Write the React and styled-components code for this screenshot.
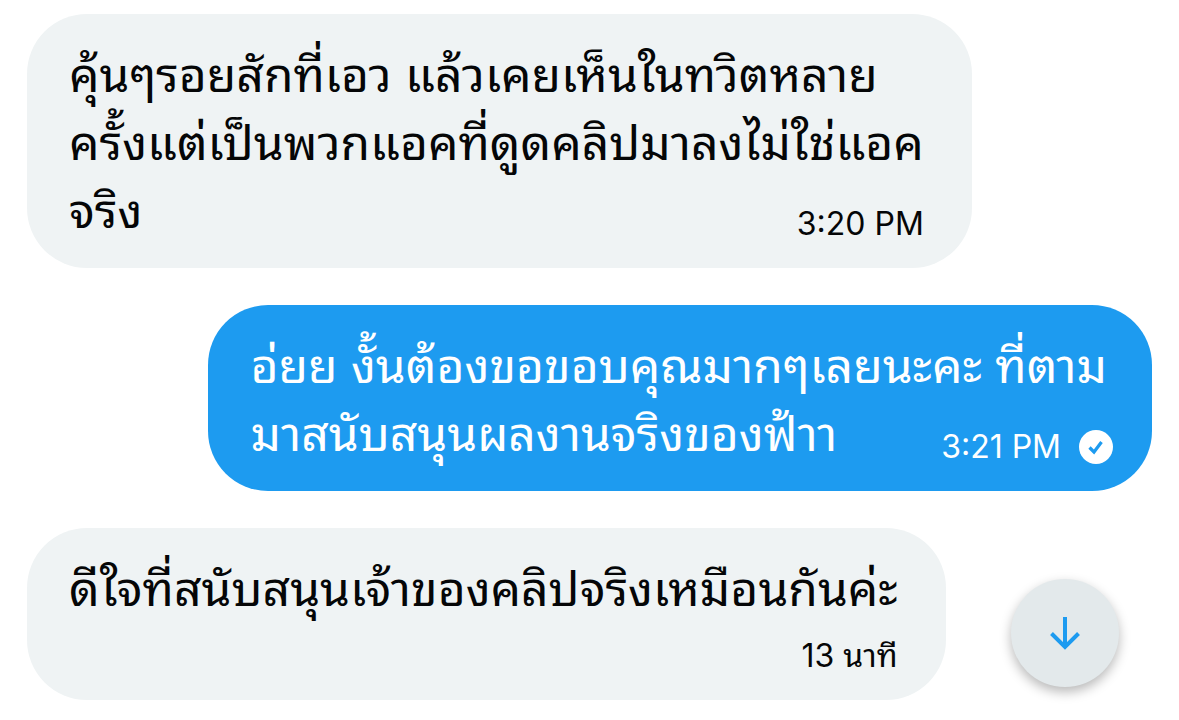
import styled, { createGlobalStyle } from 'styled-components'

const GlobalStyle = createGlobalStyle`
  * {
    box-sizing: border-box;
  }

  body {
    margin: 0;
    background: #ffffff;
    font-family: Inter, 'Noto Sans Thai Looped', Loma, Waree, Garuda, Umpush, 'Noto Sans Thai', sans-serif;
  }
`

const Conversation = styled.main`
  display: flex;
  flex-direction: column;
  gap: 37px;
  padding: 14px 27px 20px;
`

const Bubble = styled.article`
  display: grid;
  align-self: ${({ $sent }) => ($sent ? 'flex-end' : 'flex-start')};
  padding: 27px ${({ $sent }) => ($sent ? '39px' : '48px')} 23px 42px;
  border-radius: 60px;
  color: ${({ $sent }) => ($sent ? '#ffffff' : '#050607')};
  background: ${({ $sent }) => ($sent ? '#1d9bf0' : '#eff3f4')};
`

const Message = styled.p`
  grid-area: 1 / 1;
  margin: 0;
  padding-right: ${({ $sent }) => ($sent ? '6px' : '0')};
  font-size: 48px;
  line-height: 68px;
  white-space: nowrap;
`

const Meta = styled.div`
  grid-area: ${({ $below }) => ($below ? '2 / 1' : '1 / 1')};
  align-self: end;
  justify-self: end;
  display: flex;
  align-items: center;
  gap: 18px;
  padding-top: ${({ $below }) => ($below ? '12px' : '0')};
  font-size: 32px;
  line-height: 42px;
`

const Row = styled.div`
  display: flex;
  align-items: flex-end;
  justify-content: space-between;
`

const ScrollButton = styled.button`
  display: grid;
  place-items: center;
  width: 108px;
  height: 108px;
  margin: 0 33px 13px 0;
  padding: 0;
  border: 0;
  border-radius: 50%;
  color: #1d9bf0;
  background: #e3e9eb;
  box-shadow: 0 5px 12px rgba(0, 0, 0, 0.28);
`

export default function App() {
  return (
    <>
      <GlobalStyle />
      <Conversation>
        <Bubble>
          <Message>
            คุ้นๆรอยสักที่เอว แล้วเคยเห็นในทวิตหลาย
            <br />
            ครั้งแต่เป็นพวกแอคที่ดูดคลิปมาลงไม่ใช่แอค
            <br />
            จริง
          </Message>
          <Meta>
            <time>3:20 PM</time>
          </Meta>
        </Bubble>
        <Bubble $sent>
          <Message $sent>
            อ่ยย งั้นต้องขอขอบคุณมากๆเลยนะคะ ที่ตาม
            <br />
            มาสนับสนุนผลงานจริงของฟ้าา
          </Message>
          <Meta>
            <time>3:21 PM</time>
            <svg width="34" height="34" viewBox="0 0 34 34" role="img" aria-label="Sent">
              <circle cx="17" cy="17" r="17" fill="#fff" />
              <path d="M10.5 17.5l4.5 4.5 7.5-10" fill="none" stroke="#1d9bf0" strokeWidth="3.2" />
            </svg>
          </Meta>
        </Bubble>
        <Row>
          <Bubble>
            <Message>ดีใจที่สนับสนุนเจ้าของคลิปจริงเหมือนกันค่ะ</Message>
            <Meta $below>
              <time>13 นาที</time>
            </Meta>
          </Bubble>
          <ScrollButton type="button" aria-label="Scroll to latest message">
            <svg width="34" height="34" viewBox="0 0 34 34" aria-hidden="true">
              <path d="M17 1v30M3.5 17.5l13.5 13.5 13.5-13.5" fill="none" stroke="currentColor" strokeWidth="4" />
            </svg>
          </ScrollButton>
        </Row>
      </Conversation>
    </>
  )
}
